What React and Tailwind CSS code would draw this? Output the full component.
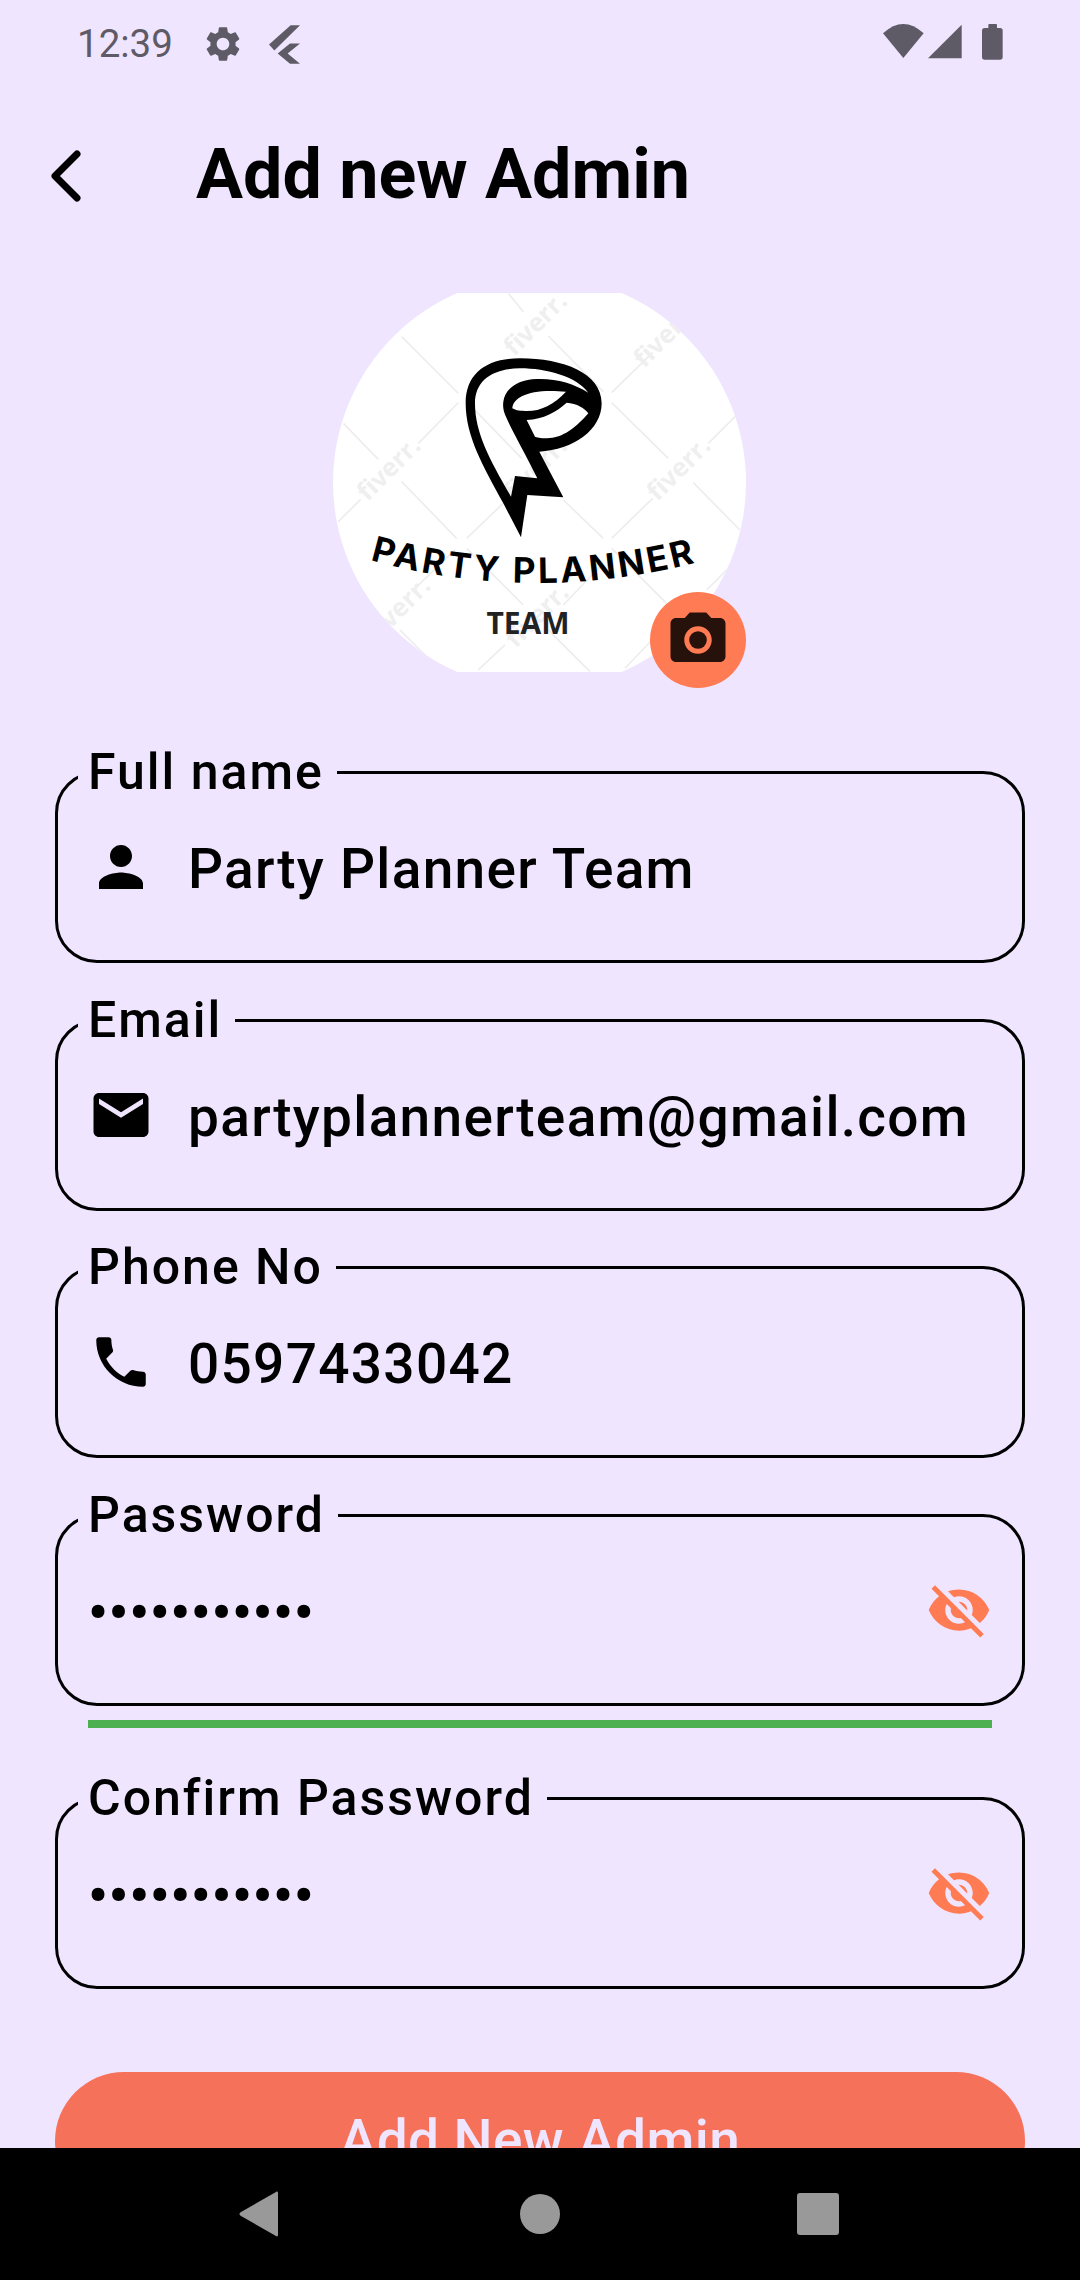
import { MdCameraAlt, MdEmail, MdPerson, MdPhone, MdSettings, MdVisibilityOff } from 'react-icons/md';

const WATERMARK_LINES = [
  [305, 200, 475, 370], [625, 70, 670, 125], [745, 198, 910, 365], [935, 368, 1058, 248],
  [355, 520, 475, 398], [130, 460, 235, 568], [935, 398, 1105, 565], [1225, 520, 1305, 440],
  [505, 400, 665, 565], [305, 635, 470, 805], [500, 805, 620, 690], [115, 755, 182, 688],
  [790, 690, 910, 805], [935, 805, 1058, 685], [1180, 638, 1320, 780], [500, 835, 670, 1005],
  [345, 955, 465, 840], [935, 835, 1100, 1000], [300, 1080, 415, 1195], [745, 1080, 870, 1205],
  [535, 1200, 615, 1125], [975, 1195, 1085, 1080], [790, 1005, 905, 885], [1220, 960, 1285, 895],
];

const WATERMARK_TEXT = [
  [710, 165], [1100, 200], [270, 600], [1140, 600], [710, 600], [300, 1020], [715, 1040],
];

const Logo = () => (
  <svg viewBox="333 276 413 413" className="w-[413px] h-[413px] shrink-0">
    <rect x="333" y="276" width="413" height="413" fill="#ffffff" />
    {/* watermark, in zoomed crop coordinates */}
    <g transform="translate(300 270) scale(0.3333)">
      {WATERMARK_LINES.map(([x1, y1, x2, y2]) => (
        <line key={`${x1}-${y1}`} x1={x1} y1={y1} x2={x2} y2={y2} stroke="#ededed" strokeWidth="5" />
      ))}
      {WATERMARK_TEXT.map(([x, y]) => (
        <text
          key={`${x}-${y}`}
          x={x}
          y={y}
          transform={`rotate(-45 ${x} ${y})`}
          textAnchor="middle"
          dominantBaseline="middle"
          fill="#efefef"
          fontSize="76"
          fontWeight="700"
          className="font-['Open_Sans',sans-serif]"
        >
          fiverr.
        </text>
      ))}
    </g>
    {/* P mark */}
    <g transform="translate(450 340) scale(0.3333)">
      <path
        fillRule="evenodd"
        fill="#000000"
        d="M213 592 L160 490 C100 380 47 290 47 190 C47 100 110 55 210 55 C340 55 455 100 455 190 C455 270 370 330 268 335 L340 472 L232 465 Z
           M183 470 L195 408 L262 415 C225 340 190 280 170 235 C160 215 158 200 160 185 C165 145 205 118 260 117 C320 115 370 130 415 158 C380 110 290 85 210 85 C130 85 75 120 75 190 C75 280 120 360 183 470 Z
           M187 205 C190 170 240 145 348 155 C310 195 270 215 225 213 C205 213 195 210 187 205 Z
           M230 240 C280 238 320 215 350 188 C380 190 405 205 415 220 C380 260 340 295 290 295 C270 295 260 292 255 290 Z"
      />
    </g>
    <path id="logo-curve" d="M370 560 Q533 605 698 562" fill="none" />
    <text fontSize="35" fontWeight="700" fill="#000000" className="font-['Inter',sans-serif]">
      <textPath href="#logo-curve" textLength="329" lengthAdjust="spacing">PARTY PLANNER</textPath>
    </text>
    <text x="528" y="634" textAnchor="middle" fontSize="30" fontWeight="700" fill="#222222" className="font-['Open_Sans',sans-serif]">
      TEAM
    </text>
  </svg>
);

const fields = [
  { label: 'Full name', value: 'Party Planner Team', Icon: MdPerson },
  { label: 'Email', value: 'partyplannerteam@gmail.com', Icon: MdEmail },
  { label: 'Phone No', value: '0597433042', Icon: MdPhone },
];

const FieldLabel = ({ children }) => (
  <span className="absolute left-[20px] top-[-2px] -translate-y-1/2 bg-[#f0e5ff] pl-[10px] pr-[13px] text-[50px] leading-[56px] font-medium tracking-[2px] text-black">
    {children}
  </span>
);

const TextRow = ({ label, value, Icon }) => (
  <div className="relative h-[192px] mb-[55.67px] flex items-center pl-[30px] border-[3px] border-black rounded-[42px]">
    <FieldLabel>{label}</FieldLabel>
    <Icon className="w-[66px] h-[66px] shrink-0 text-black" />
    <span className="ml-[34px] text-[55px] leading-[66px] font-medium tracking-[1.3px] text-black translate-y-[2px]">{value}</span>
  </div>
);

const PasswordRow = ({ label, className }) => (
  <div className={`relative h-[192px] flex items-center justify-between pl-[30px] pr-[30px] border-[3px] border-black rounded-[42px] ${className}`}>
    <FieldLabel>{label}</FieldLabel>
    <span className="text-[55px] leading-[66px] font-bold tracking-[0.8px] text-black translate-y-[3px]">•••••••••••</span>
    <MdVisibilityOff className="w-[66px] h-[66px] shrink-0 text-[#ff7b54]" />
  </div>
);

export default function App() {
  return (
    <div className="w-[1080px] h-[2280px] flex flex-col overflow-hidden bg-[#f0e5ff] font-['Roboto',sans-serif]">
      {/* status bar */}
      <div className="h-[88px] shrink-0 flex items-center pl-[77px] pr-[50px] text-[#5f5b66]">
        <span className="text-[38.5px] leading-none font-normal">12:39</span>
        <MdSettings className="ml-[29px] w-[42px] h-[42px]" />
        <svg viewBox="627 42 93 116" className="ml-[25px] w-[31px] h-[39px]" fill="currentColor">
          <polygon points="692,42 720,42 643,118 627,100" />
          <polygon points="690,97 720,97 683,127 720,158 690,158 653,127" />
        </svg>
        <svg viewBox="0 0 510 210" className="ml-auto w-[170px] h-[70px]" fill="currentColor">
          <path d="M130 147 L69 73 Q130 17 191 73 Z" />
          <polygon points="305,47 305,148 204,148" />
          <rect x="385" y="45" width="26" height="20" rx="3" />
          <rect x="366" y="57" width="62" height="95" rx="8" />
        </svg>
      </div>

      {/* app bar */}
      <div className="h-[176px] shrink-0 flex items-center pl-[49px]">
        <svg viewBox="0 0 32 56" className="w-[32px] h-[56px]" fill="none" stroke="#000000" strokeWidth="7" strokeLinecap="round" strokeLinejoin="round">
          <path d="M28 6 L6 28 L28 50" />
        </svg>
        <h1 className="ml-[115px] pb-[5px] text-[70px] leading-none font-bold text-black">Add new Admin</h1>
      </div>

      {/* scroll content */}
      <div className="flex-1 min-h-0 overflow-hidden">
        <div className="relative w-[413px] h-[379px] mt-[29px] ml-[333px]">
          <div className="w-full h-full overflow-hidden flex items-center justify-center">
            <div className="w-[413px] h-[413px] shrink-0 rounded-full overflow-hidden">
              <Logo />
            </div>
          </div>
          <div className="absolute right-0 bottom-[-16px] w-[96px] h-[96px] rounded-full bg-[#ff7b54] flex items-center justify-center">
            <MdCameraAlt className="w-[66px] h-[66px] text-[#26120a]" />
          </div>
        </div>

        <div className="mx-[55px] mt-[99px]">
          {fields.map(f => (
            <TextRow key={f.label} {...f} />
          ))}
          <PasswordRow label="Password" />
          <div className="h-[8px] mt-[14px] mx-[33px] bg-[#4caf50]" />
          <PasswordRow label="Confirm Password" className="mt-[69px]" />
          <button className="w-full h-[138px] mt-[83px] rounded-full bg-[#f6715a] text-[#f0e5ff] text-[55px] font-medium leading-none tracking-[0.4px]">
            Add New Admin
          </button>
        </div>
      </div>

      {/* nav bar */}
      <div className="h-[132px] shrink-0 bg-black flex items-center pl-[239px]">
        <svg viewBox="0 0 39 46" className="w-[39px] h-[46px]" fill="#999999">
          <path d="M37 1 C38 0 39 1 39 2 V44 C39 45 38 46 37 45 L2 25 C0 24 0 22 2 21 Z" />
        </svg>
        <div className="ml-[242px] w-[40px] h-[40px] rounded-full bg-[#999999]" />
        <div className="ml-[237px] w-[42px] h-[42px] rounded-[3px] bg-[#999999]" />
      </div>
    </div>
  );
}
